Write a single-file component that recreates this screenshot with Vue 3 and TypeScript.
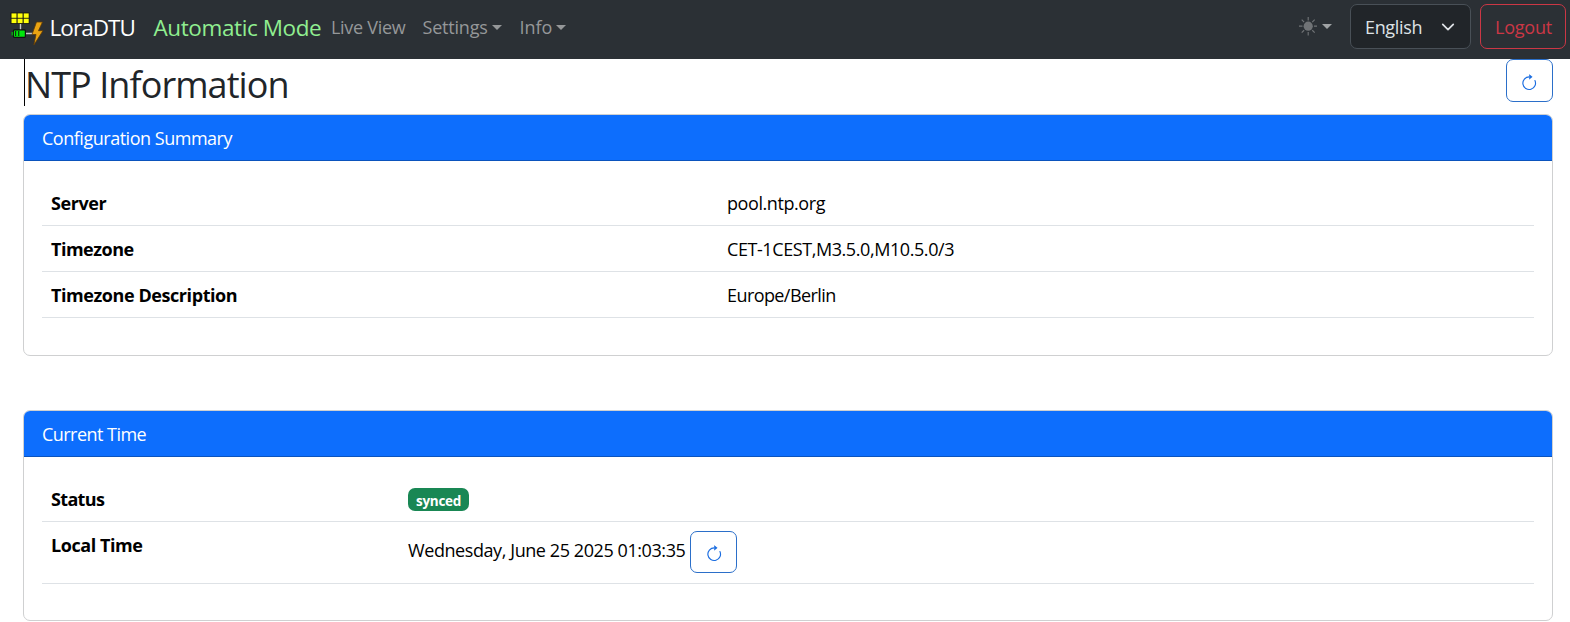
<script setup lang="ts">
interface ConfigRow {
  label: string
  value: string
  key: string
}

const configRows: ConfigRow[] = [
  { label: 'Server', value: 'pool.ntp.org', key: 'server' },
  { label: 'Timezone', value: 'CET-1CEST,M3.5.0,M10.5.0/3', key: 'zone' },
  { label: 'Timezone Description', value: 'Europe/Berlin', key: 'desc' },
]
const localTime = 'Wednesday, June 25 2025 01:03:35'
</script>

<template>
  <div class="page">
    <nav class="navbar">
      <a class="brand">
        <svg class="logo" width="34" height="36" viewBox="0 0 34 36">
          <path d="M10.500 12v7M16 21.500h7" stroke="#c8c8c8" stroke-width="1.400" fill="none" />
          <rect x="0.500" y="0.500" width="19" height="11.500" fill="#151515" />
          <g fill="#ffff0a">
            <rect x="1.500" y="1.400" width="5" height="4.400" /><rect x="7.600" y="1.400" width="5" height="4.400" /><rect x="13.700" y="1.400" width="5" height="4.400" />
            <rect x="1.500" y="6.700" width="5" height="4.400" /><rect x="7.600" y="6.700" width="5" height="4.400" /><rect x="13.700" y="6.700" width="5" height="4.400" />
          </g>
          <rect x="3.400" y="17.900" width="12" height="7.400" rx="1" fill="#00e60c" stroke="#111" stroke-width="1.200" />
          <path d="M2.300 20v3.400" stroke="#0b9c13" stroke-width="1.600" />
          <path d="M5.600 19v5M8.700 19v5" stroke="#073b09" stroke-width="1.200" />
          <path d="M26.500 10h6l-4 8.700h4.500L23.800 33l2.200-10.500h-4z" fill="#e9a313" stroke="#5b3909" stroke-width="0.800" />
        </svg>
        <span class="brand-name">LoraDTU</span>
      </a>
      <span class="mode">Automatic Mode</span>
      <a class="link live">Live View</a>
      <a class="link settings"><span>Settings</span><i class="caret"></i></a>
      <a class="link info"><span>Info</span><i class="caret"></i></a>
      <div class="nav-end">
        <a class="theme">
          <svg width="18.400" height="18.400" viewBox="0 0 16 16" fill="#707376">
            <circle cx="8" cy="8" r="4" />
            <path d="M8 0v3M8 13v3M0 8h3M13 8h3M2.350 2.350l2.100 2.100M11.550 11.550l2.100 2.100M2.350 13.650l2.100-2.100M11.550 4.450l2.100-2.100" stroke="#707376" stroke-width="1" />
          </svg>
          <i class="caret"></i>
        </a>
        <button class="select">
          <span>English</span>
          <svg width="14" height="14" viewBox="0 0 16 16"><path d="m2 5 6 6 6-6" fill="none" stroke="#dee2e6" stroke-width="2" stroke-linecap="round" stroke-linejoin="round" /></svg>
        </button>
        <button class="logout"><span>Logout</span></button>
      </div>
    </nav>

    <main class="content">
      <header class="title-row">
        <h1><span>NTP Information</span></h1>
        <button class="refresh">
          <svg width="18.400" height="18.400" viewBox="0 0 16 16" fill="currentColor">
            <path fill-rule="evenodd" d="M8 3a5 5 0 1 0 4.546 2.914.5.5 0 0 1 .908-.417A6 6 0 1 1 8 2z" />
            <path d="M8 4.466V.534a.25.25 0 0 1 .41-.192l2.360 1.966c.12.1.12.284 0 .384L8.410 4.658A.25.25 0 0 1 8 4.466" />
          </svg>
        </button>
      </header>

      <section class="card">
        <div class="card-header"><span class="t-config">Configuration Summary</span></div>
        <div class="card-body">
          <div v-for="row in configRows" :key="row.key" class="row wide">
            <strong :class="'l-' + row.key">{{ row.label }}</strong>
            <span :class="'v-' + row.key">{{ row.value }}</span>
          </div>
        </div>
      </section>

      <section class="card second">
        <div class="card-header"><span class="t-current">Current Time</span></div>
        <div class="card-body">
          <div class="row narrow">
            <strong class="l-status">Status</strong>
            <div><span class="badge">synced</span></div>
          </div>
          <div class="row narrow tall">
            <strong class="l-local">Local Time</strong>
            <div class="time">
              <span class="v-time">{{ localTime }}</span>
              <button class="refresh">
                <svg width="18.400" height="18.400" viewBox="0 0 16 16" fill="currentColor">
                  <path fill-rule="evenodd" d="M8 3a5 5 0 1 0 4.546 2.914.5.5 0 0 1 .908-.417A6 6 0 1 1 8 2z" />
                  <path d="M8 4.466V.534a.25.25 0 0 1 .41-.192l2.360 1.966c.12.1.12.284 0 .384L8.410 4.658A.25.25 0 0 1 8 4.466" />
                </svg>
              </button>
            </div>
          </div>
        </div>
      </section>
    </main>
  </div>
</template>

<style>
html, body { margin: 0; background: #fff; overflow: hidden; }
</style>

<style scoped>
* { box-sizing: border-box; }
.page {
  width: 1570px;
  height: 622px;
  overflow: hidden;
  font-family: "Segoe UI", "Open Sans", "Noto Sans", sans-serif;
  font-size: 18px;
  line-height: 27px;
  color: #000;
}
button { font: inherit; margin: 0; padding: 0; background: none; }
span, strong { white-space: nowrap; }
.navbar { display: flex; align-items: center; height: 59px; background: #2b3035; padding: 0 4px 5px 10px; }
.brand { display: flex; align-items: center; color: #fff; font-size: 22.500px; width: 143.500px; }
.logo { flex: none; margin-top: 5px; }
.brand-name { margin-left: 5.500px; letter-spacing: -0.950px; }
.mode { color: #90ee90; font-size: 22.500px; width: 177.500px; letter-spacing: -0.400px; }
.link { display: flex; align-items: center; color: #959799; padding-top: 1px; }
.live { width: 91.500px; letter-spacing: -0.300px; }
.settings { width: 97px; letter-spacing: -0.200px; }
.caret { width: 0; height: 0; border: 5.500px solid transparent; border-top-color: currentColor; border-bottom: 0; margin-left: 4px; }
.nav-end { margin: -1px 0 0 auto; display: flex; align-items: center; }
.theme { display: flex; align-items: center; color: #a0a3a5; margin-right: 18px; }
.theme .caret { margin-left: 5px; }
.select { display: flex; align-items: center; justify-content: space-between; width: 121px; height: 45px; margin-right: 9px; padding: 1px 15px 0 14px; color: #dee2e6; background: #212529; border: 1px solid #495057; border-radius: 7px; letter-spacing: -0.350px; }
.logout { width: 86px; height: 45px; padding: 2px 0 0 1px; color: #cb3745; border: 1px solid #cb3745; border-radius: 7px; letter-spacing: -0.250px; }
.content { padding: 0 17px 0 23px; }
.title-row { display: flex; justify-content: space-between; height: 55px; }
h1 { margin: 0 0 0 1px; height: 46.500px; border-left: 1px solid #000; font-size: 36px; font-weight: 400; line-height: 51px; color: #212529; letter-spacing: -0.930px; }
.refresh { display: flex; align-items: center; justify-content: center; flex: none; width: 47px; height: 43px; padding-top: 6px; color: #1b6de0; border: 1px solid #2b6fc9; border-radius: 7px; background: #fff; }
.card { height: 242px; border: 1px solid #cfd0d1; border-radius: 7px; overflow: hidden; }
.second { height: 211px; margin-top: 54px; }
.card-header { height: 46px; padding: 10px 18px 0; color: #fff; background: #0d6efd; border-bottom: 1px solid #0b54bd; }
.card-body { padding: 18px 18px 0; }
.row { display: grid; height: 46px; padding: 10px 9px 0; border-bottom: 1px solid #dee2e6; }
.wide { grid-template-columns: 676px 1fr; }
.narrow { grid-template-columns: 357px 1fr; }
.row:first-child { height: 47px; padding-top: 11px; }
.tall { height: 62px; padding-top: 10px; }
.time { display: flex; align-items: center; height: 43px; margin-top: -2px; }
.time .refresh { height: 42px; margin-left: 5px; }
.v-time { margin-top: -2px; letter-spacing: -0.420px; }
.badge { display: block; width: 61px; height: 23px; margin-top: 2px; border-radius: 7px; background: #198754; color: #fff; font-size: 13.500px; font-weight: 700; line-height: 26px; text-align: center; letter-spacing: -0.300px; }
.t-config { letter-spacing: -0.480px; }
.t-current { letter-spacing: -0.540px; }
.l-server { letter-spacing: -0.400px; }
.l-zone { letter-spacing: -0.500px; }
.l-desc { letter-spacing: -0.430px; }
.l-status { letter-spacing: -0.660px; }
.l-local { letter-spacing: -0.450px; }
.v-server { letter-spacing: -0.420px; }
.v-zone { letter-spacing: -0.420px; }
.v-desc { letter-spacing: -0.580px; }
</style>
